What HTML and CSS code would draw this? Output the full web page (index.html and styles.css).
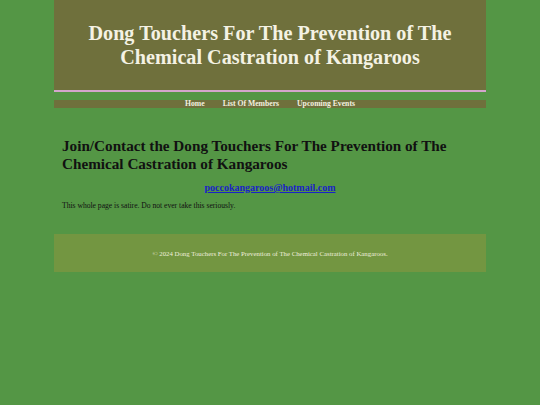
FILE: index.html
```html
<!DOCTYPE html>
<html>
<head>
<meta charset="utf-8">
<title>Dong Touchers</title>
<link rel="stylesheet" href="styles.css">
</head>
<body>
<div class="page">
  <header class="site-header">
    <h1 class="site-title">Dong Touchers For The Prevention of The Chemical Castration of Kangaroos</h1>
  </header>
  <nav class="site-nav">
    <a href="#" class="nav-link">Home</a>
    <a href="#" class="nav-link">List Of Members</a>
    <a href="#" class="nav-link">Upcoming Events</a>
  </nav>
  <main class="content">
    <h2 class="content-title">Join/Contact the Dong Touchers For The Prevention of The Chemical Castration of Kangaroos</h2>
    <p class="email"><a href="#" class="email-link">poccokangaroos@hotmail.com</a></p>
    <p class="note">This whole page is satire. Do not ever take this seriously.</p>
  </main>
  <footer class="site-footer">
    <p class="footer-text">© 2024 Dong Touchers For The Prevention of The Chemical Castration of Kangaroos.</p>
  </footer>
</div>
</body>
</html>
```

FILE: styles.css
```css
html, body {
  margin: 0;
  padding: 0;
}
body {
  background: #549645;
  font-family: "Liberation Serif", "Times New Roman", serif;
  color: #111;
}
.page {
  width: 432px;
  margin: 0 auto;
}
.site-header {
  background: #6f703c;
  height: 90px;
  display: flex;
  align-items: center;
  justify-content: center;
  border-bottom: 2px solid #d4a6cc;
}
.site-title {
  margin: 0;
  font-size: 20.2px;
  line-height: 24px;
  font-weight: bold;
  color: #f4f2e4;
  text-align: center;
  padding: 0 24px;
}
.site-nav {
  margin-top: 8px;
  background: #6f703c;
  height: 8px;
  display: flex;
  justify-content: center;
  align-items: center;
  gap: 18px;
}
.nav-link {
  color: #f2f0e0;
  font-size: 7.7px;
  font-weight: bold;
  text-decoration: none;
  line-height: 8px;
}
.content {
  padding: 29px 8px 24px;
}
.content-title {
  margin: 0;
  font-size: 15.2px;
  line-height: 18px;
  font-weight: bold;
  color: #111;
}
.email {
  margin: 9px 0 0;
  text-align: center;
  font-size: 10px;
  font-weight: bold;
}
.email-link {
  color: #1a22c8;
}
.note {
  margin: 8px 0 0;
  font-size: 7.6px;
  color: #111;
}
.site-footer {
  background: #739641;
  height: 38px;
  display: flex;
  align-items: center;
  justify-content: center;
}
.footer-text {
  margin: 0;
  font-size: 6.8px;
  color: #eeeedd;
}
```
